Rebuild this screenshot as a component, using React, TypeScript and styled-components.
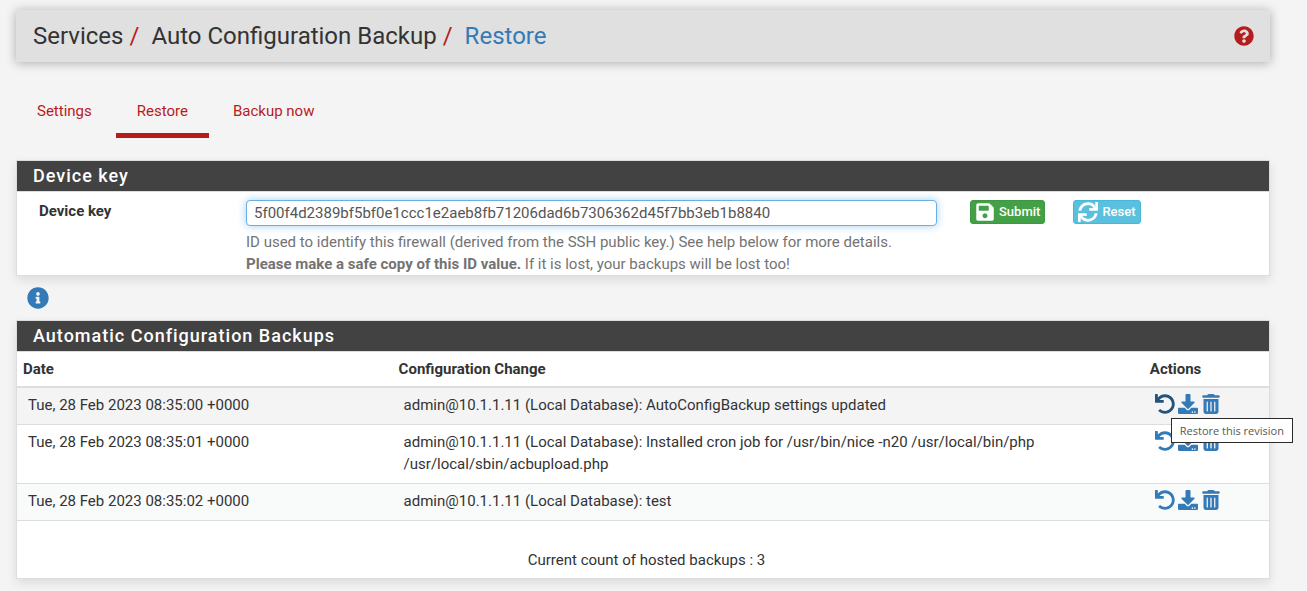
import React from 'react';
import styled, { createGlobalStyle } from 'styled-components';
import { FaQuestionCircle, FaInfoCircle, FaSave, FaDownload, FaSync, FaUndo } from 'react-icons/fa';
import { FaTrashCan } from 'react-icons/fa6';

const Global = createGlobalStyle`
  *, *::before, *::after { box-sizing: border-box; }
  body {
    margin: 0;
    background: #f4f4f4;
    color: #333;
    font: 400 15px/22px Roboto, sans-serif;
  }
`;

const Page = styled.div`
  padding: 10px 37px 12px 16px;
`;

const Header = styled.header`
  display: flex;
  align-items: center;
  justify-content: space-between;
  height: 52px;
  padding: 0 16px 0 17px;
  background: #e0e0e0;
  box-shadow: 0 1px 10px rgba(0, 0, 0, 0.3);
`;

const Breadcrumb = styled.ol`
  display: flex;
  margin: 0;
  padding: 0;
  list-style: none;
  font-size: 24px;
  line-height: 32px;
`;

const Crumb = styled.li`
  & + &::before {
    content: '/';
    padding: 0 12px 0 6px;
    color: #b71c1c;
  }
  a { color: #337ab7; text-decoration: none; }
`;

const HelpLink = styled.a`
  display: flex;
  color: #b71c1c;
  font-size: 20px;
`;

const Tabs = styled.nav`
  display: flex;
  margin: 26px 0 22px;
  gap: 3px;
`;

const Tab = styled.a<{ $active?: boolean }>`
  padding: 12px 21px 11px;
  border-bottom: 5px solid ${(p) => (p.$active ? '#b71c1c' : 'transparent')};
  color: #b71c1c;
  text-decoration: none;
`;

const Panel = styled.section`
  background: #fff;
  border: 1px solid #ddd;
  box-shadow: 0 4px 10px rgba(0, 0, 0, 0.1);
`;

const PanelTitle = styled.h2`
  margin: 0;
  padding: 3px 16px;
  background: #424242;
  border-bottom: 1px solid #ddd;
  color: #fff;
  font-size: 18px;
  font-weight: 500;
  line-height: 24px;
  letter-spacing: 1px;
`;

const KeyForm = styled.form`
  display: grid;
  grid-template-columns: 207px minmax(0, 691px) 1fr;
  padding: 8px 22px 0;
`;

const FieldLabel = styled.label`
  font-weight: 700;
`;

const KeyInput = styled.input`
  display: block;
  width: 100%;
  height: 26px;
  padding: 0 7px;
  border: 1px solid #66afe9;
  border-radius: 4px;
  outline: 0;
  color: #555;
  background: #fff;
  font: inherit;
  box-shadow: 0 0 8px rgba(102, 175, 233, 0.6);
`;

const Help = styled.p`
  margin: 5px 0 0;
  color: #737373;
  strong { font-weight: 700; }
`;

const Buttons = styled.div`
  display: flex;
  align-items: flex-start;
  gap: 28px;
  padding-left: 33px;
`;

const Button = styled.button<{ $color: string; $edge: string }>`
  display: flex;
  align-items: center;
  gap: 4px;
  height: 24px;
  padding: 0 4px;
  border: 1px solid ${(p) => p.$edge};
  border-radius: 3px;
  background: ${(p) => p.$color};
  color: #fff;
  font: 500 13px/18px Roboto, sans-serif;
  svg { width: 20px; height: 20px; }
`;

const InfoButton = styled.button`
  display: flex;
  margin: 11px 0 11px 11px;
  padding: 0;
  border: 0;
  background: none;
  color: #337ab7;
  font-size: 22px;
`;

const Table = styled.table`
  width: 100%;
  border-collapse: separate;
  border-spacing: 0;
  table-layout: fixed;
`;

const HeadCell = styled.th<{ $width: string }>`
  width: ${(p) => p.$width};
  padding: 6px;
  border-bottom: 2px solid #ddd;
  font-weight: 700;
  text-align: left;
`;

const Row = styled.tr<{ $bg: string }>`
  background: ${(p) => p.$bg};
`;

const Cell = styled.td`
  padding: 6px 11px 8px;
  border-bottom: 1px solid #ddd;
  vertical-align: top;
`;

const Actions = styled.div`
  position: relative;
  display: flex;
  align-items: center;
  gap: 3px;
  height: 20px;
`;

const Action = styled.a<{ $hover?: boolean }>`
  display: flex;
  color: ${(p) => (p.$hover ? '#23527c' : '#337ab7')};
  svg { width: auto; height: 20px; }
`;

const Tooltip = styled.span`
  position: absolute;
  z-index: 1;
  top: 24px;
  left: 16px;
  padding: 3px 8px;
  border: 1px solid #2b2b2b;
  background: #fff;
  color: #575757;
  font: 11px/17px 'Open Sans', sans-serif;
  white-space: nowrap;
`;

const Count = styled.p`
  margin: 0;
  padding: 28px 0 7px 7px;
  text-align: center;
`;

const backups = [
  { date: 'Tue, 28 Feb 2023 08:35:00 +0000', change: 'admin@10.1.1.11 (Local Database): AutoConfigBackup settings updated', bg: '#f4f4f4' },
  { date: 'Tue, 28 Feb 2023 08:35:01 +0000', change: 'admin@10.1.1.11 (Local Database): Installed cron job for /usr/bin/nice -n20 /usr/local/bin/php /usr/local/sbin/acbupload.php', bg: '#fff' },
  { date: 'Tue, 28 Feb 2023 08:35:02 +0000', change: 'admin@10.1.1.11 (Local Database): test', bg: '#f9fafa' },
];

export default function App() {
  return (
    <Page>
      <Global />
      <Header>
        <Breadcrumb>
          <Crumb>Services</Crumb>
          <Crumb>Auto Configuration Backup</Crumb>
          <Crumb><a href="#restore">Restore</a></Crumb>
        </Breadcrumb>
        <HelpLink href="#help" aria-label="Help"><FaQuestionCircle /></HelpLink>
      </Header>
      <Tabs>
        <Tab href="#settings">Settings</Tab>
        <Tab href="#restore" $active>Restore</Tab>
        <Tab href="#backup">Backup now</Tab>
      </Tabs>
      <Panel>
        <PanelTitle>Device key</PanelTitle>
        <KeyForm onSubmit={(e) => e.preventDefault()}>
          <FieldLabel htmlFor="devkey">Device key</FieldLabel>
          <div>
            <KeyInput id="devkey" defaultValue="5f00f4d2389bf5bf0e1ccc1e2aeb8fb71206dad6b7306362d45f7bb3eb1b8840" />
            <Help>
              ID used to identify this firewall (derived from the SSH public key.) See help below for more details.
              <br />
              <strong>Please make a safe copy of this ID value.</strong> If it is lost, your backups will be lost too!
            </Help>
          </div>
          <Buttons>
            <Button type="submit" $color="#43a047" $edge="#419641"><FaSave />Submit</Button>
            <Button type="reset" $color="#5bc0de" $edge="#46b8da"><FaSync />Reset</Button>
          </Buttons>
        </KeyForm>
      </Panel>
      <InfoButton type="button" aria-label="Information"><FaInfoCircle /></InfoButton>
      <Panel>
        <PanelTitle>Automatic Configuration Backups</PanelTitle>
        <Table>
          <thead>
            <tr>
              <HeadCell $width="30%">Date</HeadCell>
              <HeadCell $width="60%">Configuration Change</HeadCell>
              <HeadCell $width="10%">Actions</HeadCell>
            </tr>
          </thead>
          <tbody>
            {backups.map((b, i) => (
              <Row key={b.date} $bg={b.bg}>
                <Cell>{b.date}</Cell>
                <Cell>{b.change}</Cell>
                <Cell>
                  <Actions>
                    <Action href="#revert" aria-label="Restore this revision" $hover={i === 0}><FaUndo /></Action>
                    <Action href="#download" aria-label="Download this revision"><FaDownload /></Action>
                    <Action href="#delete" aria-label="Delete this revision"><FaTrashCan /></Action>
                    {i === 0 && <Tooltip role="tooltip">Restore this revision</Tooltip>}
                  </Actions>
                </Cell>
              </Row>
            ))}
          </tbody>
        </Table>
        <Count>Current count of hosted backups : 3</Count>
      </Panel>
    </Page>
  );
}
